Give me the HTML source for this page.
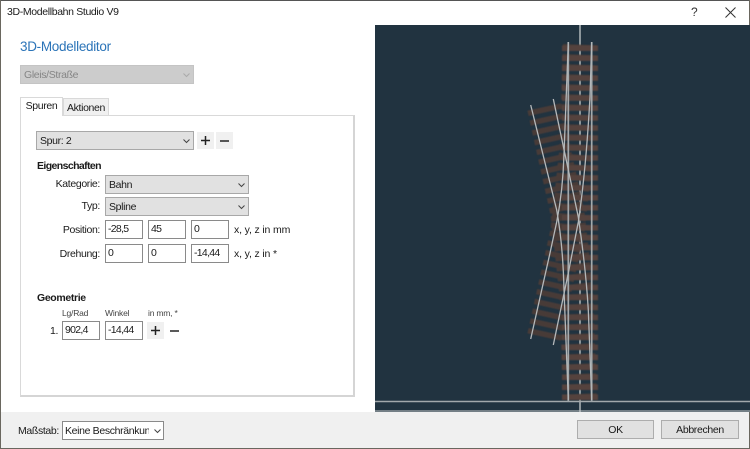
<!DOCTYPE html>
<html lang="de">
<head>
<meta charset="utf-8">
<title>3D-Modellbahn Studio V9</title>
<style>
html,body{margin:0;padding:0;}
body{width:750px;height:449px;overflow:hidden;background:#fff;position:relative;font-family:"Liberation Sans",sans-serif;font-size:10.5px;letter-spacing:-.35px;color:#1a1a1a;}
.a{position:absolute;white-space:nowrap;}
.combo{position:absolute;box-sizing:border-box;background:#e1e1e1;border:1px solid #a8a8a8;line-height:18px;padding-left:3px;white-space:nowrap;}
.combo svg{position:absolute;right:3px;top:7px;}
.inp{position:absolute;box-sizing:border-box;background:#fff;border:1px solid #8a8a8a;width:38px;height:19px;line-height:17px;padding-left:2px;font-size:10.5px;letter-spacing:-.7px;}
.lab{position:absolute;text-align:right;width:70px;left:30px;}
.btn{position:absolute;box-sizing:border-box;background:#e1e1e1;border:1px solid #adadad;text-align:center;line-height:18px;}
.sq{position:absolute;width:17px;height:17px;}
</style>
</head>
<body>
<div class="a" style="left:0;top:0;width:750px;height:1px;background:#555"></div>
<div class="a" style="left:0;top:0;width:1px;height:449px;background:#6a675f"></div>
<div class="a" style="left:749px;top:0;width:1px;height:449px;background:#6a675f"></div>
<div class="a" style="left:7px;top:6px;">3D-Modellbahn Studio V9</div>
<div class="a" style="left:691px;top:5px;font-size:12px;color:#333">?</div>
<svg class="a" style="left:725px;top:7px" width="11" height="11"><path d="M.5 .5L10.5 10.5M10.5 .5L.5 10.5" stroke="#333" stroke-width="1" fill="none"/></svg>

<div class="a" style="left:20px;top:39px;font-size:13.5px;letter-spacing:-.3px;color:#2b74b8">3D-Modelleditor</div>

<div class="combo" style="left:20px;top:65px;width:174px;height:19px;background:#cccccc;border-color:#c4c4c4;color:#858585">Gleis/Straße<svg width="7" height="5"><path d="M.5 .5L3.500 3.500L6.500 .5" stroke="#aaa" fill="none"/></svg></div>

<div class="a" style="left:20px;top:115px;width:335px;height:282px;box-sizing:border-box;background:#fff;border:1px solid #d9d9d9;border-bottom:2px solid #d5d5d5;border-right:2px solid #d5d5d5"></div>
<div class="a" style="left:63px;top:98px;width:46px;height:18px;box-sizing:border-box;background:#f0f0f0;border:1px solid #d9d9d9;text-align:center;line-height:18px;">Aktionen</div>
<div class="a" style="left:20px;top:97px;width:43px;height:19px;box-sizing:border-box;background:#fff;border:1px solid #d9d9d9;border-bottom:0;text-align:center;line-height:17px;">Spuren</div>

<div class="combo" style="left:36px;top:131px;width:158px;height:19px;">Spur: 2<svg width="7" height="5"><path d="M.5 .5L3.500 3.500L6.500 .5" stroke="#444" fill="none"/></svg></div>
<div class="sq" style="left:197px;top:132px;background:#f0f0f0"><svg width="17" height="17"><path d="M4 8.500H13M8.500 4V13" stroke="#222" stroke-width="1.500"/></svg></div>
<div class="sq" style="left:216px;top:132px;background:#f0f0f0"><svg width="17" height="17"><path d="M4 9H13" stroke="#222" stroke-width="1.500"/></svg></div>

<div class="a" style="left:37px;top:160px;font-weight:bold;letter-spacing:-.6px">Eigenschaften</div>
<div class="lab" style="top:178px">Kategorie:</div>
<div class="combo" style="left:105px;top:175px;width:144px;height:19px;">Bahn<svg width="7" height="5"><path d="M.5 .5L3.500 3.500L6.500 .5" stroke="#444" fill="none"/></svg></div>
<div class="lab" style="top:200px">Typ:</div>
<div class="combo" style="left:105px;top:197px;width:144px;height:19px;">Spline<svg width="7" height="5"><path d="M.5 .5L3.500 3.500L6.500 .5" stroke="#444" fill="none"/></svg></div>

<div class="lab" style="top:224px">Position:</div>
<div class="inp" style="left:105px;top:220px">-28,5</div>
<div class="inp" style="left:148px;top:220px">45</div>
<div class="inp" style="left:191px;top:220px">0</div>
<div class="a" style="left:234px;top:224px;letter-spacing:-.15px">x, y, z in mm</div>

<div class="lab" style="top:248px">Drehung:</div>
<div class="inp" style="left:105px;top:244px">0</div>
<div class="inp" style="left:148px;top:244px">0</div>
<div class="inp" style="left:191px;top:244px">-14,44</div>
<div class="a" style="left:234px;top:248px;letter-spacing:-.15px">x, y, z in *</div>

<div class="a" style="left:37px;top:292px;font-weight:bold">Geometrie</div>
<div class="a" style="left:62px;top:308px;font-size:8.500px;letter-spacing:-.2px;color:#444">Lg/Rad</div>
<div class="a" style="left:105px;top:308px;font-size:8.500px;letter-spacing:-.2px;color:#444">Winkel</div>
<div class="a" style="left:148px;top:308px;font-size:8.500px;letter-spacing:-.2px;color:#444">in mm, *</div>
<div class="a" style="left:50px;top:325px">1.</div>
<div class="inp" style="left:62px;top:321px">902,4</div>
<div class="inp" style="left:105px;top:321px">-14,44</div>
<div class="sq" style="left:147px;top:322px;background:#f0f0f0"><svg width="17" height="17"><path d="M4 8.500H13M8.500 4V13" stroke="#222" stroke-width="1.500"/></svg></div>
<div class="sq" style="left:166px;top:322px"><svg width="17" height="17"><path d="M4 9H13" stroke="#222" stroke-width="1.500"/></svg></div>

<svg class="a" style="left:375px;top:25px" width="375" height="387" viewBox="375 25 375 387">
<defs><filter id="b" filterUnits="userSpaceOnUse" x="375" y="25" width="375" height="387"><feGaussianBlur stdDeviation=".4"/></filter></defs>
<rect x="375" y="25" width="375" height="387" fill="#213340"/>
<line x1="580" y1="25" x2="580" y2="412" stroke="#8d979c" stroke-width="2"/>
<g filter="url(#b)">
<g fill="none" stroke="#4f3d38" stroke-width="34" opacity=".85">
<path d="M544 107L567.500 213L576 290L580 400" stroke-dasharray="5.500 4.500"/>
<path d="M544 337L567.500 231L576 154L580 44" stroke-dasharray="5.500 4.500"/>
</g>
<line x1="580" y1="45.500" x2="580" y2="401" stroke="#54423c" stroke-width="36" stroke-dasharray="5.500 4.470"/>
</g>
<g fill="none" stroke="#b4b8ba" stroke-width="1.300">
<line x1="568.300" y1="42" x2="568.300" y2="401" stroke="#a3a9ac" stroke-width="1.700"/>
<line x1="591.700" y1="42" x2="591.700" y2="401" stroke="#a3a9ac" stroke-width="1.700"/>
<path d="M530.700 105L556.700 210Q563 245 564 290L568.300 400"/>
<path d="M553.300 99L578.300 217Q586 270 588.300 310L591.700 400"/>
<path d="M530.700 339L550 253L556.700 222Q563 190 564 154L568.300 42"/>
<path d="M553.300 345L568.300 273L578.300 222Q586 170 590 97L591.700 42"/>
</g>
<line x1="375" y1="401.500" x2="750" y2="401.500" stroke="#a2a8ab" stroke-width="1.500"/>
<line x1="375" y1="411" x2="750" y2="411" stroke="#c8cbcc" stroke-width="1"/>
</svg>

<div class="a" style="left:1px;top:412px;width:748px;height:36px;background:#f0f0f0"></div>
<div class="a" style="left:0;top:448px;width:750px;height:1px;background:#6a675f"></div>
<div class="a" style="left:18px;top:425px">Maßstab:</div>
<div class="combo" style="left:62px;top:421px;width:102px;height:19px;background:#fff;border-color:#8a8a8a;overflow:hidden;padding-left:2px"><span style="display:block;width:84px;overflow:hidden">Keine Beschränkung</span><svg width="7" height="5" style="right:2px"><path d="M.5 .5L3.500 3.500L6.500 .5" stroke="#444" fill="none"/></svg></div>
<div class="btn" style="left:577px;top:420px;width:77px;height:19px">OK</div>
<div class="btn" style="left:661px;top:420px;width:78px;height:19px">Abbrechen</div>
</body>
</html>
